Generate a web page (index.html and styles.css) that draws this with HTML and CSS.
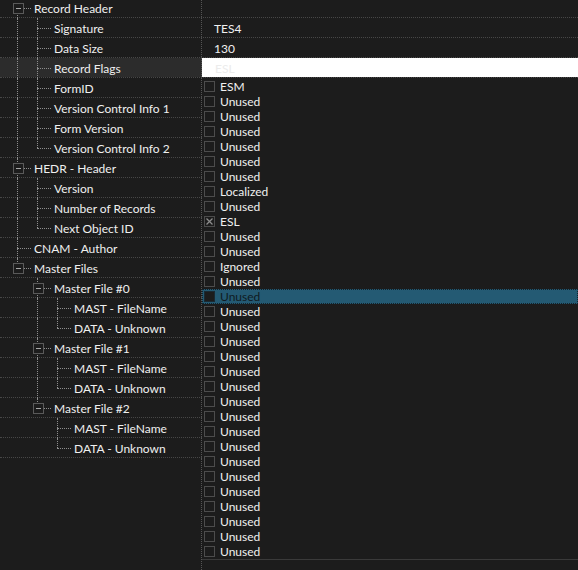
FILE: index.html
```html
<!DOCTYPE html>
<html lang="en">
<head>
  <meta charset="UTF-8" />
  <title>Record Header</title>
  <link rel="stylesheet" href="styles.css">
</head>
<body>

  <!-- Property grid -->
  <div class="grid">
    <div class="row"><div class="name"><span class="ind first"><i class="box"></i></span><span class="label">Record Header</span></div><div class="value"></div></div>
    <div class="row"><div class="name"><span class="ind line"></span><span class="ind tee"></span><span class="label">Signature</span></div><div class="value">TES4</div></div>
    <div class="row"><div class="name"><span class="ind line"></span><span class="ind tee"></span><span class="label">Data Size</span></div><div class="value">130</div></div>
    <div class="row current"><div class="name"><span class="ind line"></span><span class="ind tee"></span><span class="label">Record Flags</span></div><div class="value edit">ESL</div></div>
    <div class="row"><div class="name"><span class="ind line"></span><span class="ind tee"></span><span class="label">FormID</span></div><div class="value"></div></div>
    <div class="row"><div class="name"><span class="ind line"></span><span class="ind tee"></span><span class="label">Version Control Info 1</span></div><div class="value"></div></div>
    <div class="row"><div class="name"><span class="ind line"></span><span class="ind tee"></span><span class="label">Form Version</span></div><div class="value"></div></div>
    <div class="row"><div class="name"><span class="ind line"></span><span class="ind elbow"></span><span class="label">Version Control Info 2</span></div><div class="value"></div></div>
    <div class="row"><div class="name"><span class="ind tee"><i class="box"></i></span><span class="label">HEDR - Header</span></div><div class="value"></div></div>
    <div class="row"><div class="name"><span class="ind line"></span><span class="ind tee"></span><span class="label">Version</span></div><div class="value"></div></div>
    <div class="row"><div class="name"><span class="ind line"></span><span class="ind tee"></span><span class="label">Number of Records</span></div><div class="value"></div></div>
    <div class="row"><div class="name"><span class="ind line"></span><span class="ind elbow"></span><span class="label">Next Object ID</span></div><div class="value"></div></div>
    <div class="row"><div class="name"><span class="ind tee"></span><span class="label">CNAM - Author</span></div><div class="value"></div></div>
    <div class="row"><div class="name"><span class="ind elbow"><i class="box"></i></span><span class="label">Master Files</span></div><div class="value"></div></div>
    <div class="row"><div class="name"><span class="ind"></span><span class="ind tee"><i class="box"></i></span><span class="label">Master File #0</span></div><div class="value"></div></div>
    <div class="row"><div class="name"><span class="ind"></span><span class="ind line"></span><span class="ind tee"></span><span class="label">MAST - FileName</span></div><div class="value"></div></div>
    <div class="row"><div class="name"><span class="ind"></span><span class="ind line"></span><span class="ind elbow"></span><span class="label">DATA - Unknown</span></div><div class="value"></div></div>
    <div class="row"><div class="name"><span class="ind"></span><span class="ind tee"><i class="box"></i></span><span class="label">Master File #1</span></div><div class="value"></div></div>
    <div class="row"><div class="name"><span class="ind"></span><span class="ind line"></span><span class="ind tee"></span><span class="label">MAST - FileName</span></div><div class="value"></div></div>
    <div class="row"><div class="name"><span class="ind"></span><span class="ind line"></span><span class="ind elbow"></span><span class="label">DATA - Unknown</span></div><div class="value"></div></div>
    <div class="row"><div class="name"><span class="ind"></span><span class="ind elbow"><i class="box"></i></span><span class="label">Master File #2</span></div><div class="value"></div></div>
    <div class="row"><div class="name"><span class="ind"></span><span class="ind"></span><span class="ind tee"></span><span class="label">MAST - FileName</span></div><div class="value"></div></div>
    <div class="row"><div class="name"><span class="ind"></span><span class="ind"></span><span class="ind elbow"></span><span class="label">DATA - Unknown</span></div><div class="value"></div></div>
    <div class="rest"><div class="name"></div></div>
  </div>

  <!-- Flags dropdown -->
  <div class="flags">
    <div class="flag"><span class="check"></span>ESM</div>
    <div class="flag"><span class="check"></span>Unused</div>
    <div class="flag"><span class="check"></span>Unused</div>
    <div class="flag"><span class="check"></span>Unused</div>
    <div class="flag"><span class="check"></span>Unused</div>
    <div class="flag"><span class="check"></span>Unused</div>
    <div class="flag"><span class="check"></span>Unused</div>
    <div class="flag"><span class="check"></span>Localized</div>
    <div class="flag"><span class="check"></span>Unused</div>
    <div class="flag"><span class="check checked"><svg width="7" height="7" viewBox="0 0 7 7"><path d="M0.5 0.5L6.5 6.5M6.5 0.5L0.5 6.5" stroke="#8c8c8c" stroke-width="1.3"/></svg></span>ESL</div>
    <div class="flag"><span class="check"></span>Unused</div>
    <div class="flag"><span class="check"></span>Unused</div>
    <div class="flag"><span class="check"></span>Ignored</div>
    <div class="flag"><span class="check"></span>Unused</div>
    <div class="flag selected"><span class="check"></span>Unused</div>
    <div class="flag"><span class="check"></span>Unused</div>
    <div class="flag"><span class="check"></span>Unused</div>
    <div class="flag"><span class="check"></span>Unused</div>
    <div class="flag"><span class="check"></span>Unused</div>
    <div class="flag"><span class="check"></span>Unused</div>
    <div class="flag"><span class="check"></span>Unused</div>
    <div class="flag"><span class="check"></span>Unused</div>
    <div class="flag"><span class="check"></span>Unused</div>
    <div class="flag"><span class="check"></span>Unused</div>
    <div class="flag"><span class="check"></span>Unused</div>
    <div class="flag"><span class="check"></span>Unused</div>
    <div class="flag"><span class="check"></span>Unused</div>
    <div class="flag"><span class="check"></span>Unused</div>
    <div class="flag"><span class="check"></span>Unused</div>
    <div class="flag"><span class="check"></span>Unused</div>
    <div class="flag"><span class="check"></span>Unused</div>
    <div class="flag"><span class="check"></span>Unused</div>
  </div>

</body>
</html>
```

FILE: styles.css
```css
* {
  margin: 0;
  padding: 0;
  box-sizing: border-box;
}

body {
  background: #1c1c1c;
  color: #f0f0f0;
  font-family: Lato, sans-serif;
  font-size: 12px;
  height: 570px;
  overflow: hidden;
  position: relative;
}

/* Grid */
.grid {
  display: flex;
  flex-direction: column;
  height: 572px;
  margin-top: -2px;
}

.row {
  display: flex;
  height: 20px;
  flex: none;
  border-bottom: 1px dotted #474747;
}

.name {
  width: 202px;
  flex: none;
  display: flex;
  align-items: stretch;
  padding-left: 7px;
  border-right: 1px dotted #555;
}

.label {
  margin-left: 7px;
  padding-top: 1px;
  line-height: 19px;
  white-space: nowrap;
}

.value {
  flex: 1;
  padding: 1px 0 0 12px;
  line-height: 19px;
}

.current .name {
  background: #2c2c2c;
}

.value.edit {
  background: #fff;
  color: #ececec;
  padding-left: 13px;
}

.rest {
  flex: 1;
  display: flex;
}

/* Tree lines */
.ind {
  width: 20px;
  flex: none;
  position: relative;
}

.ind::before,
.ind::after {
  content: "";
  position: absolute;
}

.line::before,
.tee::before {
  left: 10px;
  top: 0;
  bottom: -1px;
  border-left: 1px dotted #8e8e8e;
}

.elbow::before {
  left: 10px;
  top: 0;
  height: 10px;
  border-left: 1px dotted #8e8e8e;
}

.first::before {
  left: 10px;
  top: 10px;
  bottom: -1px;
  border-left: 1px dotted #8e8e8e;
}

.tee::after,
.elbow::after,
.first::after {
  left: 10px;
  top: 10px;
  width: 14px;
  border-top: 1px dotted #8e8e8e;
}

.box {
  position: absolute;
  left: 6px;
  top: 5px;
  width: 11px;
  height: 11px;
  border: 1px solid #5a5a5a;
  background: #1c1c1c;
  z-index: 1;
}

.box::after {
  content: "";
  position: absolute;
  left: 2px;
  top: 4px;
  width: 5px;
  height: 1px;
  background: #a8a8a8;
}

/* Dropdown */
.flags {
  position: absolute;
  left: 202px;
  top: 79px;
  width: 376px;
  background: #1c1c1c;
  border-bottom: 1px solid #3a3a3a;
}

.flag {
  display: flex;
  align-items: center;
  height: 15px;
  padding-left: 2px;
  line-height: 15px;
}

.check {
  width: 11px;
  height: 11px;
  border: 1px solid #4c4c4c;
  margin-right: 5px;
  display: flex;
  align-items: center;
  justify-content: center;
}

.flag.selected {
  background: #245a73;
  color: #0f1a22;
  outline: 1px dotted #12232c;
  outline-offset: -1px;
}

.flag.selected .check {
  background: #1c1c1c;
  border-color: #1a2a33;
}
```
